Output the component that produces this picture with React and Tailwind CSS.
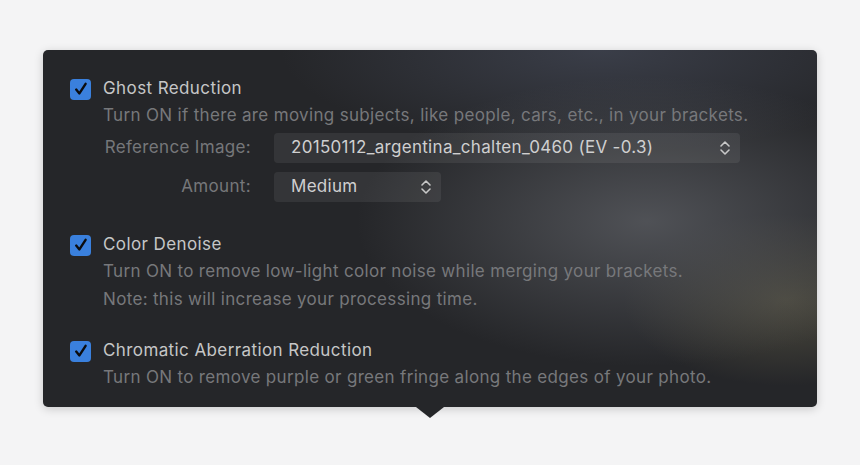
import React from 'react';

const Check = () => (
  <div className="w-[21px] h-[21px] rounded-[4px] bg-[#3a80dd] flex items-center justify-center shrink-0">
    <svg width="16" height="16" viewBox="0 0 16 16" fill="none">
      <path d="M3.2 8.6 L6.4 12.4 L12.6 2.8" stroke="#0c0c0e" strokeWidth="2.4" strokeLinecap="round" strokeLinejoin="round" />
    </svg>
  </div>
);

const Chevrons = () => (
  <svg width="12" height="18" viewBox="0 0 12 18" fill="none">
    <path d="M2 7 L6 3 L10 7" stroke="#c8c8c8" strokeWidth="1.6" strokeLinecap="round" strokeLinejoin="round" />
    <path d="M2 11 L6 15 L10 11" stroke="#c8c8c8" strokeWidth="1.6" strokeLinecap="round" strokeLinejoin="round" />
  </svg>
);

const Select = ({ value, className }) => (
  <div className={`h-[30px] rounded-[4px] bg-white/[0.07] flex items-center justify-between pl-[17px] pr-[9px] ${className}`}>
    <span className="text-[17px] tracking-[0.3px] text-[#cfcfd0]">{value}</span>
    <Chevrons />
  </div>
);

const Option = ({ title, children }) => (
  <div>
    <div className="flex items-center gap-[12px] h-[26px]">
      <Check />
      <span className="text-[17px] tracking-[0.4px] text-[#c6c6c7]">{title}</span>
    </div>
    <div className="pl-[33px] -mt-[1px]">{children}</div>
  </div>
);

const Desc = ({ children }) => (
  <p className="text-[17px] leading-[28px] tracking-[0.33px] text-[#77787b]">{children}</p>
);

export default function App() {
  return (
    <div
      className="w-[860px] h-[465px] bg-[#f4f4f5] pt-[50px] pl-[43px]"
      style={{ fontFamily: 'Inter, "Noto Sans", sans-serif' }}
    >
      <div className="relative w-[774px] h-[357px]">
        <div className="w-full h-full rounded-[5px] shadow-[0_2px_10px_rgba(0,0,0,0.18)] bg-[#252629] bg-[image:radial-gradient(ellipse_48%_52%_at_78%_48%,rgba(84,86,91,0.9),transparent_78%),radial-gradient(ellipse_28%_32%_at_96%_70%,rgba(92,88,70,0.7),transparent_75%),radial-gradient(ellipse_55%_38%_at_72%_0%,rgba(62,66,78,0.85),transparent_75%)] pt-[26px] pl-[27px]">
          <Option title="Ghost Reduction">
            <Desc>Turn ON if there are moving subjects, like people, cars, etc., in your brackets.</Desc>
            <div className="grid grid-cols-[171px_466px] gap-y-[9px] mt-[4px] items-center">
              <span className="text-[17px] tracking-[0.33px] text-[#76777a] text-right pr-[23px]">Reference Image:</span>
              <Select value="20150112_argentina_chalten_0460 (EV -0.3)" className="w-[466px]" />
              <span className="text-[17px] tracking-[0.33px] text-[#76777a] text-right pr-[23px]">Amount:</span>
              <Select value="Medium" className="w-[167px]" />
            </div>
          </Option>
          <div className="mt-[30px]">
            <Option title="Color Denoise">
              <Desc>Turn ON to remove low-light color noise while merging your brackets.</Desc>
              <Desc>Note: this will increase your processing time.</Desc>
            </Option>
          </div>
          <div className="mt-[25px]">
            <Option title="Chromatic Aberration Reduction">
              <Desc>Turn ON to remove purple or green fringe along the edges of your photo.</Desc>
            </Option>
          </div>
        </div>
        <div className="absolute left-[373px] top-[357px] w-0 h-0 border-l-[14px] border-r-[14px] border-t-[11px] border-l-transparent border-r-transparent border-t-[#252629]" />
      </div>
    </div>
  );
}
